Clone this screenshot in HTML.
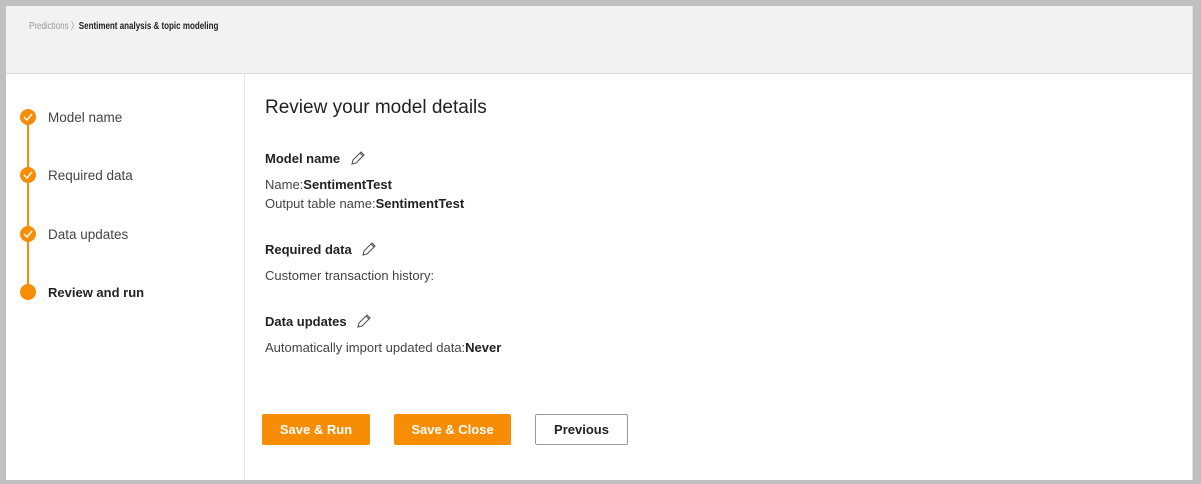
<!DOCTYPE html>
<html><head><meta charset="utf-8"><style>
*{margin:0;padding:0;box-sizing:border-box}
body{width:1201px;height:484px;background:#c0c0c0;font-family:"Source Sans Pro","Liberation Sans",sans-serif;position:relative;overflow:hidden;color:#333}
.frame{position:absolute;left:6px;top:6px;width:1187px;height:474px;background:#fff;border-right:1px solid #e0e0e0}
.hdr{position:absolute;left:0;top:0;width:100%;height:68px;background:#f2f2f2;border-bottom:1px solid #ddd}
.bc{position:absolute;left:23px;top:11px;font-size:10px;color:#999;transform:scaleX(0.8);transform-origin:0 0;white-space:nowrap}
.bc b{color:#222;font-weight:600}
.side{position:absolute;left:0;top:68px;width:239px;height:406px;border-right:1px solid #e6e6e6}
.line{position:absolute;left:21px;top:43px;width:2px;height:175px;background:#f68d04}
.dot{position:absolute;left:14px;width:16px;height:16px;border-radius:50%;background:#f68d04}
.dot svg{position:absolute;left:3px;top:4px}
.st{position:absolute;left:42px;font-size:13.5px;color:#444}
.t{position:absolute;white-space:nowrap}
h1{font-size:19px;font-weight:400;color:#222}
.h{font-size:13px;font-weight:700;color:#222}
.p{font-size:13px;color:#444}
.p b{color:#222;font-weight:600}
.btn{position:absolute;top:408px;height:31px;border-radius:2px;font-size:13px;font-weight:600;display:flex;align-items:center;justify-content:center}
.o{background:#f68d04;color:#fff}
.w{background:#fff;border:1px solid #999;color:#222}
</style></head><body>
<div class="frame">
<div class="hdr"><div class="bc">Predictions 〉<b>Sentiment analysis &amp; topic modeling</b></div></div>
<div class="side">
<div class="line"></div>
<div class="dot" style="top:35px"><svg width="10" height="8"><path d="M1 4l3 3 5-6" stroke="#fff" stroke-width="1.5" fill="none"/></svg></div>
<div class="dot" style="top:93px"><svg width="10" height="8"><path d="M1 4l3 3 5-6" stroke="#fff" stroke-width="1.5" fill="none"/></svg></div>
<div class="dot" style="top:152px"><svg width="10" height="8"><path d="M1 4l3 3 5-6" stroke="#fff" stroke-width="1.5" fill="none"/></svg></div>
<div class="dot" style="top:210px"></div>
<div class="st" style="top:36px">Model name</div>
<div class="st" style="top:94px">Required data</div>
<div class="st" style="top:153px">Data updates</div>
<div class="st" style="top:211px;font-weight:700;color:#222;font-size:13px">Review and run</div>
</div>
<div class="t" style="left:259px;top:91px"><h1>Review your model details</h1></div>
<div class="t h" style="left:259px;top:144px">Model name <svg width="16" height="16" style="vertical-align:-3px;margin-left:6px"><path d="M2 14l1-4 8-8 3 3-8 8z M10 3l3 3" stroke="#555" stroke-width="1.1" fill="none"/></svg></div>
<div class="t p" style="left:259px;top:171px">Name:<b>SentimentTest</b></div>
<div class="t p" style="left:259px;top:190px">Output table name:<b>SentimentTest</b></div>
<div class="t h" style="left:259px;top:235px">Required data <svg width="16" height="16" style="vertical-align:-3px;margin-left:6px"><path d="M2 14l1-4 8-8 3 3-8 8z M10 3l3 3" stroke="#555" stroke-width="1.1" fill="none"/></svg></div>
<div class="t p" style="left:259px;top:262px">Customer transaction history:</div>
<div class="t h" style="left:259px;top:307px">Data updates <svg width="16" height="16" style="vertical-align:-3px;margin-left:6px"><path d="M2 14l1-4 8-8 3 3-8 8z M10 3l3 3" stroke="#555" stroke-width="1.1" fill="none"/></svg></div>
<div class="t p" style="left:259px;top:334px">Automatically import updated data:<b>Never</b></div>
<div class="btn o" style="left:256px;width:108px">Save &amp; Run</div>
<div class="btn o" style="left:388px;width:117px">Save &amp; Close</div>
<div class="btn w" style="left:529px;width:93px">Previous</div>
</div>
</body></html>
